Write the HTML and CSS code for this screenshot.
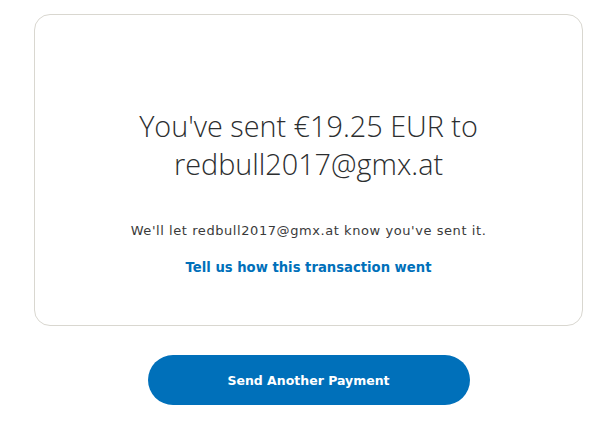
FILE: index.html
```html
<!DOCTYPE html>
<html>
<head>
<meta charset="utf-8">
<link rel="stylesheet" href="styles.css">
</head>
<body>
<main class="page">
  <section class="card">
    <h1 class="headline">You've sent €19.25 EUR to<br>redbull2017@gmx.at</h1>
    <p class="note">We'll let redbull2017@gmx.at know you've sent it.</p>
    <a class="link" href="#">Tell us how this transaction went</a>
  </section>
  <button class="primary">Send Another Payment</button>
</main>
</body>
</html>
```

FILE: styles.css
```css
html, body {
  margin: 0;
  padding: 0;
  background: #fff;
}
.page {
  width: 615px;
  height: 430px;
  display: flex;
  flex-direction: column;
  align-items: center;
  padding: 14px 0 0 2px;
  box-sizing: border-box;
}
.card {
  width: 549px;
  height: 312px;
  box-sizing: border-box;
  border: 1px solid #d9d7d0;
  border-radius: 16px;
  display: flex;
  flex-direction: column;
  align-items: center;
  padding-top: 92px;
}
.headline {
  margin: 0;
  font-family: "Open Sans", sans-serif;
  font-weight: 300;
  font-size: 28.8px;
  line-height: 38px;
  color: #2c2e2f;
  text-align: center;
}
.note {
  margin: 39px 0 0;
  font-family: "DejaVu Sans", sans-serif;
  font-size: 13px;
  letter-spacing: 0.57px;
  color: #3a3a3a;
  line-height: 18px;
}
.link {
  margin-top: 20px;
  font-family: "DejaVu Sans", sans-serif;
  font-weight: bold;
  font-size: 13.2px;
  color: #0070ba;
  text-decoration: none;
}
.primary {
  margin-top: 29px;
  width: 322px;
  height: 50px;
  border: none;
  border-radius: 25px;
  background: #0070ba;
  color: #fff;
  font-family: "DejaVu Sans", sans-serif;
  font-weight: bold;
  font-size: 12.5px;
}
```
